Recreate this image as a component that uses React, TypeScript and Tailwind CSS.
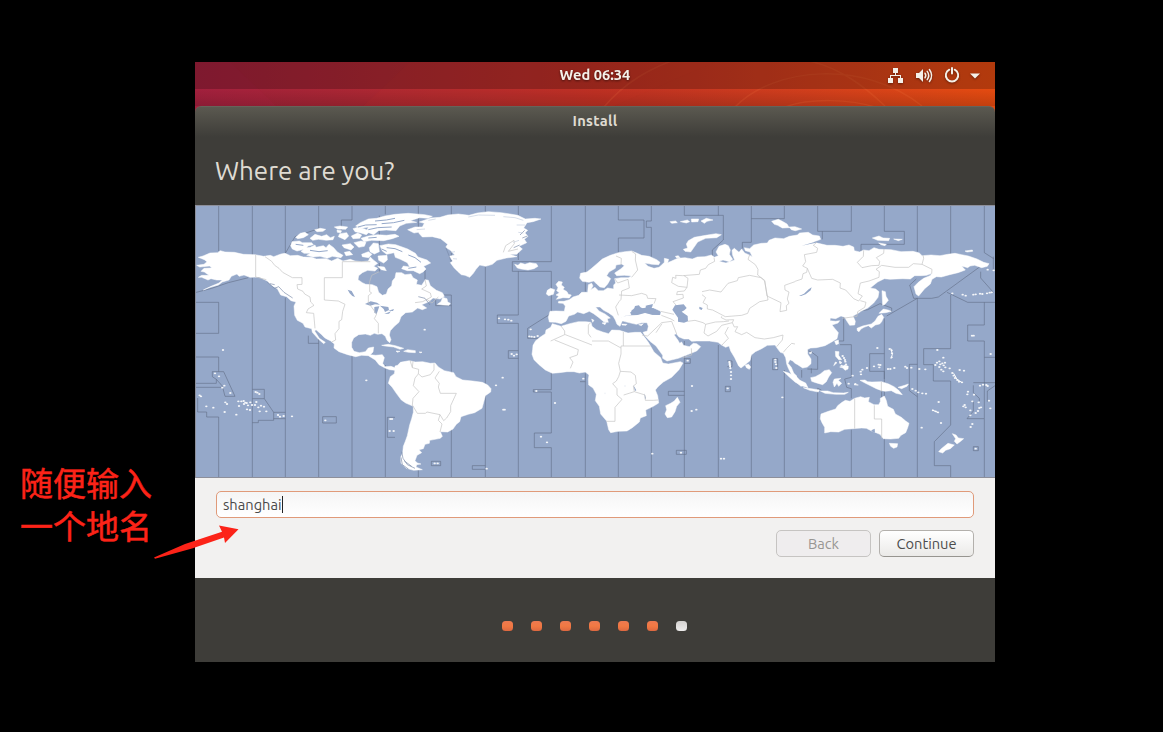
import React from "react";

const LAND: string[] = [
  // North America
  "M10 157L24 153L45 144L68 143L76 137L90 141L118 142L145 148L180 149L206 154L226 151L236 155L258 147L270 145L286 152L308 151L325 156L350 157L364 162L394 161L410 168L428 160L444 168L466 163L480 168L500 170L520 168L526 156L535 165L548 175L536 184L548 190L540 198L518 196L502 203L491 212L489 224L502 233L512 238L532 239L546 245L551 262L562 271L574 267L579 252L590 242L592 228L600 218L603 203L620 203L630 209L648 207L654 218L667 225L664 238L680 241L691 224L700 226L706 242L724 256L742 263L748 274L735 282L714 279L700 291L680 299L695 309L682 314L668 309L652 321L632 323L618 335L612 352L598 364L586 377L583 390L588 404L584 413L576 406L571 394L561 386L548 388L538 385L526 391L511 387L491 389L476 399L470 412L470 427L477 439L493 443L511 440L520 429L536 426L534 441L526 449L542 451L562 449L568 458L563 475L570 485L588 484L604 490L600 496L584 494L570 489L552 479L541 465L520 452L500 451L482 455L458 449L432 440L417 429L418 417L406 407L390 400L380 389L363 374L359 378L373 400L391 412L386 416L370 402L352 382L350 371L330 366L324 355L307 346L299 331L297 303L303 291L288 287L275 275L257 270L247 251L231 242L215 227L192 216L165 217L147 210L132 214L126 207L109 214L102 225L82 231L70 240L46 247L25 255L48 244L72 234L82 225L65 225L48 221L39 225L20 217L10 217L20 211L42 211L28 201L18 199L27 190L50 189L44 183L14 186L5 181L27 178L36 170L28 164Z",
  // Arctic archipelago
  "M287 122L291 110L313 108L322 113L350 113L355 119L339 123L331 132L306 138L292 132Z",
  "M318 139L334 128L346 127L360 120L363 127L385 122L393 128L402 118L416 128L427 141L444 151L438 158L412 154L397 160L375 154L354 156L335 151L346 145L327 145Z",
  "M302 97L316 85L330 82L340 89L325 98L308 101ZM345 100L360 88L380 94L395 89L406 98L418 94L414 104L394 106L370 103L353 106ZM359 74L376 70L392 73L384 79L366 80Z",
  "M418 66L435 63L458 66L452 73L428 72ZM434 86L455 83L461 93L450 104L430 95ZM426 75L440 77L437 83L427 82ZM441 120L466 116L477 126L468 135L447 128ZM469 93L488 84L500 90L494 100L474 101Z",
  "M474 71L488 67L509 72L525 79L514 89L498 84L480 80ZM477 113L498 108L513 112L508 124L491 127ZM482 63L496 53L520 42L545 40L570 33L600 28L640 25L689 29L712 34L699 40L673 38L646 47L665 52L634 55L614 63L603 77L574 75L550 77L536 89L514 80L520 66L501 70Z",
  "M498 100L520 93L548 89L574 91L600 88L612 94L592 101L566 107L530 106L507 110ZM523 128L535 114L550 116L553 140L538 147L525 140ZM448 142L464 139L473 149L453 152ZM500 148L520 140L531 148L521 158L502 155ZM549 153L576 151L577 165L566 174L551 166ZM548 184L568 186L574 197L559 194Z",
  "M555 122L580 117L602 119L613 123L638 132L661 145L669 156L696 165L707 174L686 184L693 192L684 201L674 206L655 197L637 197L620 191L625 183L644 186L637 173L616 163L601 157L597 143L575 148L562 138Z",
  // Greenland
  "M638 74L660 66L682 66L688 55L673 51L707 39L735 37L758 30L790 27L822 31L847 24L880 20L919 23L945 27L968 31L991 42L1020 40L1038 42L1014 50L996 53L986 69L998 76L990 84L999 94L988 103L995 113L972 124L982 132L965 148L944 148L966 155L934 159L906 166L892 178L872 184L854 180L843 193L835 205L824 217L810 211L799 209L789 200L777 188L766 173L773 168L763 154L779 150L766 136L752 127L758 118L737 101L712 95L682 96L669 82L657 84Z",
  "M727 298L738 290L743 277L756 281L758 291L766 295L762 301L744 300Z",
  // Iceland and Britain
  "M959 178L969 181L977 174L990 178L1004 173L1024 176L1029 184L1017 191L999 195L978 192L967 189Z",
  "M1083 238L1091 229L1102 231L1099 240L1108 247L1104 253L1116 260L1120 268L1129 270L1123 279L1104 278L1084 283L1091 274L1083 270L1093 263L1085 257L1089 248ZM1054 267L1057 256L1067 250L1079 254L1075 268L1061 272Z",
  // Eurasia
  "M1200 247L1210 257L1225 257L1238 249L1256 252L1256 240L1262 234L1259 221L1278 218L1300 218L1310 213L1288 211L1265 212L1259 204L1277 192L1288 182L1280 177L1263 180L1261 190L1242 201L1235 212L1247 221L1238 237L1228 248L1215 246L1205 237L1196 228L1182 232L1162 229L1154 219L1157 205L1176 201L1190 190L1205 177L1222 162L1246 151L1270 143L1290 140L1310 138L1325 144L1340 151L1362 154L1385 164L1395 172L1391 179L1371 178L1349 174L1359 184L1377 190L1392 187L1399 181L1408 172L1408 160L1421 163L1418 173L1430 168L1448 160L1470 158L1492 162L1507 156L1530 155L1549 150L1558 157L1570 152L1563 141L1572 124L1590 118L1600 122L1606 135L1603 148L1613 163L1603 170L1584 165L1572 169L1593 174L1619 165L1613 151L1611 136L1618 130L1632 142L1640 132L1649 144L1661 149L1672 155L1665 141L1651 137L1648 128L1664 131L1676 120L1699 115L1717 114L1722 106L1740 99L1766 101L1783 94L1807 90L1814 84L1840 82L1853 90L1873 93L1877 103L1856 111L1870 115L1896 121L1920 121L1944 124L1962 120L1976 126L1978 137L1994 141L2006 135L2022 137L2037 128L2052 133L2088 134L2118 140L2154 139L2173 144L2181 152L2208 150L2235 152L2258 148L2280 145L2300 149L2320 153L2346 162L2366 172L2382 176L2377 184L2360 188L2339 181L2325 183L2318 188L2300 183L2311 195L2289 203L2264 209L2239 216L2224 215L2211 223L2206 237L2189 251L2171 273L2163 267L2157 245L2170 232L2186 220L2205 212L2211 205L2195 211L2179 212L2159 212L2146 222L2123 221L2085 223L2068 221L2048 231L2033 243L2026 249L2042 252L2052 260L2049 277L2036 294L2018 309L1998 319L1989 325L1974 333L1981 349L1979 360L1964 361L1956 349L1949 337L1938 333L1922 341L1906 339L1905 347L1922 349L1934 347L1929 354L1911 360L1920 371L1930 383L1926 401L1910 411L1890 422L1864 428L1847 429L1838 433L1838 447L1848 462L1848 476L1837 486L1823 489L1808 479L1800 475L1793 468L1785 464L1779 475L1789 487L1796 504L1806 514L1800 516L1789 508L1780 490L1775 477L1772 458L1765 445L1756 442L1749 433L1740 420L1717 421L1700 431L1681 440L1669 450L1665 467L1652 478L1638 489L1631 483L1619 458L1607 438L1602 423L1592 427L1581 421L1569 412L1543 408L1505 408L1490 409L1481 402L1467 402L1452 396L1444 386L1437 389L1449 406L1454 415L1460 411L1465 421L1483 425L1495 415L1505 416L1517 425L1505 438L1488 445L1450 460L1416 468L1403 460L1403 451L1383 423L1365 409L1350 393L1344 382L1357 378L1360 364L1356 353L1340 353L1324 358L1298 352L1276 346L1280 335L1299 332L1328 330L1350 324L1373 330L1396 330L1397 319L1376 309L1365 309L1375 302L1359 300L1350 308L1343 310L1330 302L1320 308L1309 316L1308 329L1291 332L1278 337L1282 347L1275 364L1266 358L1261 345L1254 333L1240 323L1226 316L1215 306L1202 306L1212 318L1230 327L1246 339L1237 341L1240 352L1226 350L1212 338L1196 326L1183 319L1166 326L1148 321L1138 328L1121 333L1113 349L1099 356L1081 352L1063 351L1060 337L1065 319L1082 318L1108 319L1111 303L1104 295L1090 294L1091 289L1107 289L1123 284L1134 276L1151 271L1160 262L1178 262L1180 239L1190 235L1194 243L1187 254Z",
  // Africa
  "M1072 356L1098 364L1124 356L1150 350L1172 350L1188 352L1191 364L1204 374L1223 381L1241 386L1250 375L1273 376L1299 384L1320 382L1337 382L1349 397L1360 412L1377 441L1397 458L1403 474L1420 477L1456 470L1464 474L1452 494L1430 517L1405 531L1389 545L1381 555L1388 572L1391 594L1375 604L1352 615L1354 632L1336 639L1333 651L1312 668L1296 678L1269 679L1247 683L1241 674L1235 648L1217 627L1213 604L1201 587L1204 568L1194 549L1181 540L1180 523L1182 510L1171 501L1153 504L1137 500L1116 500L1093 503L1072 505L1051 495L1032 479L1017 464L1011 448L1013 433L1014 421L1022 407L1035 397L1051 386L1053 375L1067 367Z",
  "M1447 577L1455 592L1445 604L1440 620L1430 636L1417 638L1410 627L1415 614L1412 602L1427 595L1438 588Z",
  // South America
  "M600 483L608 481L616 472L632 469L643 467L661 471L683 470L706 475L720 474L730 486L748 497L776 503L783 515L803 525L833 528L862 532L878 540L888 551L887 561L871 572L866 592L861 610L839 623L820 628L798 635L794 650L784 658L774 672L758 681L736 680L742 694L736 700L704 706L703 715L690 718L685 731L672 734L680 743L666 751L660 767L667 774L678 777L665 779L663 786L682 794L656 796L634 790L618 775L617 757L623 744L625 724L631 709L637 692L644 660L650 641L655 622L655 604L632 594L619 585L604 565L591 546L580 535L586 515L598 506L600 494Z",
  // Australia and New Zealand
  "M1878 627L1900 619L1922 612L1928 602L1941 592L1951 586L1965 589L1979 580L1997 575L2009 579L2023 577L2020 590L2037 599L2051 599L2056 590L2056 580L2068 573L2074 587L2078 604L2095 613L2101 627L2119 637L2132 648L2142 655L2138 668L2132 683L2118 691L2111 700L2087 702L2065 701L2055 688L2043 683L2030 678L2014 670L2000 669L1972 671L1949 673L1931 681L1907 680L1889 684L1889 667L1881 653L1876 641ZM2083 715L2108 716L2106 726L2096 730L2087 724Z",
  "M2272 686L2283 690L2290 699L2306 701L2297 709L2286 717L2278 709L2282 701ZM2259 715L2278 720L2266 731L2252 736L2243 744L2231 740L2238 732Z",
  // Southeast Asian islands
  "M1765 499L1781 504L1798 513L1813 525L1832 534L1839 548L1820 542L1800 531L1782 515ZM1800 510L1809 520L1818 530L1826 541L1818 544L1800 529ZM1847 518L1861 515L1876 507L1888 497L1903 494L1910 503L1901 516L1894 530L1883 539L1862 533L1850 529Z",
  "M1825 548L1839 550L1855 552L1873 555L1870 561L1844 556ZM1876 558L1898 558L1915 563L1946 564L1960 562L1949 568L1922 568L1890 565ZM1914 532L1918 522L1938 520L1930 526L1940 535L1931 544L1926 535L1918 546Z",
  "M1995 526L2010 525L2018 530L2031 531L2060 530L2081 537L2097 545L2111 556L2122 569L2103 565L2089 557L2070 559L2060 557L2044 551L2028 543L2010 534ZM2109 547L2129 541L2140 537L2136 544L2120 551Z",
  "M1921 439L1932 440L1931 451L1940 464L1931 464L1922 454ZM1934 486L1942 484L1950 480L1960 484L1959 492L1950 496L1944 489ZM1933 468L1940 472L1936 477ZM1921 471L1926 473L1916 482ZM1842 444L1850 440L1848 447ZM1919 409L1930 405L1931 416L1923 419Z",
  // Japan, Sakhalin, Sri Lanka
  "M1986 370L2003 363L2029 357L2040 348L2049 334L2060 328L2066 337L2060 350L2054 357L2041 360L2029 369L2020 362L2007 367L1998 372L1992 380L1987 377ZM2052 325L2058 319L2065 312L2079 315L2089 319L2072 323ZM2061 257L2071 260L2073 274L2080 286L2070 298L2063 301ZM1651 480L1661 478L1667 486L1663 493L1654 488Z",
  // Northern islands
  "M1465 133L1478 129L1474 117L1480 107L1498 97L1532 91L1563 86L1579 89L1565 98L1532 100L1508 111L1497 127L1487 141L1470 139ZM1425 50L1442 48L1447 53L1430 55ZM1456 50L1477 45L1484 50L1474 54ZM1489 42L1511 42L1509 50L1490 51ZM1518 48L1534 40L1554 45L1536 49L1528 55Z",
  "M1730 49L1750 43L1762 49L1776 57L1783 68L1762 69L1748 61L1738 58ZM1782 66L1800 65L1820 72L1801 77L1789 74ZM2032 99L2052 93L2064 99L2084 100L2081 107L2048 106ZM2096 102L2122 103L2110 107ZM2051 114L2074 118L2070 122L2058 119ZM2310 138L2332 135L2333 139L2316 141ZM1441 154L1450 152L1455 158L1444 158Z",
  // Caribbean
  "M560 421L580 418L601 422L626 430L615 433L596 426L570 423ZM626 439L638 434L661 437L661 443L640 442ZM603 438L615 439L607 442ZM672 441L681 441L678 444Z",
  // Mediterranean islands
  "M1281 357L1296 358L1293 361L1281 360ZM1331 359L1345 356L1339 362ZM1190 342L1197 346L1193 352ZM1221 354L1234 352L1230 359Z",
];

const LAKES: string[] = [
  "M1305 323L1317 313L1320 303L1332 301L1337 310L1353 309L1352 302L1374 297L1370 308L1390 317L1397 322L1394 330L1372 329L1350 323L1326 330L1310 329Z",
  "M1432 314L1440 301L1466 298L1475 309L1468 316L1460 320L1478 333L1479 349L1467 353L1449 350L1449 338L1441 327Z",
  "M458 254L470 258L480 276L472 273L464 265Z",
  "M510 297L527 289L546 293L555 299L540 298L526 302ZM538 306L553 304L545 327L538 323ZM555 302L580 306L582 315L570 321L566 312ZM568 327L588 319L582 326ZM580 317L597 312L594 318Z",
  "M1812 273L1827 266L1841 253L1850 247L1847 256L1832 268L1818 273Z",
  "M1513 305L1523 309L1520 315L1513 312ZM1315 540L1324 556L1320 558ZM1348 565L1353 580L1350 582ZM1877 110L1820 122L1861 110ZM2029 676L2039 671L2040 683L2032 680Z",
  "M360 377L372 388L396 404L405 411L387 400L369 386Z",
];

const BORDERS: string[] = [
  "M182 149V216L214 224M210 155L230 169L239 181L252 190L263 202L292 218H321V238L306 239L308 252L324 259L329 267L345 276L347 291L357 301L339 312L334 323L356 325L360 370",
  "M526 170H442V218H388V285L430 288L450 298L443 319L440 344L432 349V371L420 386L422 405L410 411",
  "M553 200L530 211L524 230V260L530 264L520 272V293L545 327L538 341L550 355V385",
  "M690 224L694 243L680 252L706 264L709 276L683 290L660 293M696 283L711 294L730 276M925 142L932 122L957 106L958 116L940 139L969 132",
  "M654 469L652 488L671 493L670 507L660 519L655 542L672 560L654 580L652 600L667 625L691 625L696 621L735 629L746 647L755 639L767 620L767 602L784 565H736L730 546L733 535L720 519L733 499M671 507L681 516L706 509L717 495V475M735 629L730 646L741 657L735 681M645 466L652 488",
  "M1098 363L1109 378L1109 389L1067 408M1079 405L1150 434L1147 450L1124 458L1134 471L1126 490M1109 389H1111L1191 420",
  "M1188 352L1180 360V386L1188 397M1285 381V423H1366M1285 423H1278V447L1271 475L1276 499L1271 515L1264 528L1253 536L1266 551L1266 570L1281 583L1260 607V649L1234 649M1191 408H1240L1278 429M1276 499L1308 501L1321 511L1324 536L1315 543L1318 560L1350 570L1351 586L1376 586L1389 585M1318 560L1286 570",
  "M1463 458L1490 450L1489 430M1263 153L1279 160L1278 180M1310 139L1322 147L1321 165L1328 195L1310 217M1259 221L1268 234L1299 223L1303 249L1280 258L1278 283L1272 290L1262 306L1270 331M1272 270L1310 272L1340 265L1355 270L1358 280L1383 281L1377 296M1397 319L1437 328",
  "M1557 158L1559 169L1540 179L1532 190L1516 195L1513 208L1463 212L1442 211L1443 220L1433 217L1430 233L1450 244L1476 247L1479 220L1467 212M1476 247L1468 258L1447 260L1445 269L1464 268L1465 279L1434 290L1443 300",
  "M1521 260L1544 255L1578 261L1599 235L1627 227L1630 218L1664 211L1698 218L1709 228L1719 285L1694 290L1664 310L1658 325L1640 331L1591 335L1553 315L1537 312L1537 300L1524 293L1532 278L1521 269",
  "M1664 149L1659 163L1681 179L1689 193L1688 210L1709 226M1709 226L1716 273L1758 293L1755 320L1775 316L1774 302L1782 295L1777 282L1782 261L1770 255L1769 241L1800 230",
  "M1478 349L1500 346L1524 353L1532 358L1527 384L1539 393L1565 379L1580 361L1612 353L1616 344L1593 345L1579 338L1580 334M1532 358L1561 351L1585 350L1602 348M1612 353L1618 366L1628 365L1620 380L1640 389L1655 382L1680 398L1708 402L1735 398L1764 390L1762 405L1745 425M1600 366L1590 385L1600 400L1580 421M1342 391L1358 393L1400 353L1430 349L1445 387M1383 383L1401 356M1399 331L1428 342L1438 348",
  "M1866 111L1855 121L1868 130L1865 142L1828 149L1832 170L1823 183L1837 190L1835 202L1824 206L1821 222L1800 229M1837 190L1850 220L1868 225L1913 223L1936 234L1935 249L1952 255L1976 281L1991 288L2002 273L1989 266L1996 234L2022 228L2052 217L2053 200L2043 193L2060 181M2006 136L2005 154L1987 172L2001 188L2030 182L2052 181L2054 169L2044 158L2066 145L2067 132M2060 181L2100 187L2141 187L2155 176L2181 178L2186 160L2184 150M2181 178L2211 193L2210 206M1996 287L2013 292L2009 307L1988 320L1986 334L1942 340",
  "M1979 580V671M2038 601V642H2060V700M2059 530V560M1765 442L1775 430L1790 415L1800 417",
];

const ZONES: string[] = [
  "M71 0V138M172 0V150M172 218V819M271 0V145L300 95L371 71V0M271 278V819M371 402V819M471 0V45H439V78M471 450V819M571 0V28M571 480V819M553 32V120M553 174V200",
  "M0 263L50 250L100 233L160 218M0 292H71V385H0M0 456H71V500H52V515L64 523L82 543L90 574H120L86 500H71M0 535H64V523M0 547H80M8 579V621H35V636H71V819M172 553H208V581H172M208 581L236 622V646H190V653H172M236 622H271M236 641H271M340 392V415H371M383 635H424V654H383ZM600 637H577V697H600",
  "M670 0V85M670 792V819M690 195V223M769 0V170M747 270H769V819M722 285V302H769M871 0V22M871 184V819M970 0V30M970 132V165M952 170H1069V0M952 170V199H1069V325L998 370V400H1035M970 199V330H907V355H970V819M940 437H970M940 437V460H970",
  "M1069 502V554H1015V561H1069V684H1018V728H1069V819M1171 0V260M1171 505V819M871 782H832V793H871M709 769H737V782H709ZM1155 530H1171",
  "M1270 0V45H1347V99H1270V143M1369 0V48H1354V67H1369V155M1270 680V819M1369 604V819M1468 0V31H1585V105L1552 135V153M1468 408V819M1570 0V31M1570 420V819M1669 0V112H1642V130M1669 41H1768V0M1669 448V819M1768 495V819M1420 559H1468M1420 559V571H1468M1444 736H1474V748H1444ZM1591 544H1606V560H1591ZM1733 461H1748V494H1733ZM1468 461H1486V475H1468M1597 468H1611V485H1597",
  "M1868 0V79H1969V0M1882 79V103M2068 0V79H2128V118H1998V137M2167 0V140M2267 0V148M2368 0V143L2396 161M2395 155V195M2355 185L2230 276L2210 280H2156L2144 240L2164 222M2256 262L2318 292H2400M2357 200V219L2395 262M2167 280V819M2075 333L2167 280M2068 340V819M2267 270V431H2186V479H2215V528H2267V660L2218 710V782H2267V819",
  "M1838 416L1820 432L1848 440L1868 455V493L1837 492M1868 550V819M1946 337V408H1930M1935 419H1969V517L1949 522L1955 547L1969 551V580M1969 674V819M2068 446H2024V499H2068V522M2143 478H2167M2143 478V557L2167 575M2318 408V360H2368V292M2318 408H2368V819M2400 457H2368M2335 541V563L2353 580V588M2335 533H2400M2400 542L2377 558V590M2335 588V618L2316 641H2367M2335 725H2350V737H2335Z",
  "M1868 550L1879 555M1950 324L1986 320L2018 314L2055 296L2090 309V320M1820 495V518M1849 490V505M2060 600V555",
];

const ISLANDS: number[][] = [
  [84, 435], [60, 505], [72, 514], [88, 542], [82, 548], [106, 564], [14, 571], [18, 574], [34, 604], [55, 608], [91, 592], [96, 597], [89, 621], [124, 629],
  [130, 589], [139, 589], [132, 603], [146, 588], [151, 593], [147, 597], [155, 594], [159, 601], [166, 592], [171, 600], [156, 613], [165, 615], [180, 600], [184, 591], [190, 607], [198, 602], [207, 605], [194, 619], [214, 619], [182, 561], [187, 563], [193, 567],
  [249, 630], [255, 635], [266, 633], [291, 634], [391, 646], [514, 526], [586, 642], [591, 642], [584, 678], [596, 678], [689, 374], [912, 340], [930, 343], [940, 344], [949, 347],
  [1007, 373], [1003, 394], [1010, 395], [1018, 396], [1028, 393], [950, 447], [957, 452], [965, 448], [923, 518], [903, 541], [925, 614], [929, 614], [1024, 558], [1080, 594], [1038, 695], [1056, 712], [875, 791], [719, 775], [728, 775],
  [1165, 521], [1230, 565], [1290, 543], [1491, 543], [1490, 618], [1504, 614], [1458, 743], [1372, 746], [1578, 761], [1587, 761], [1478, 467], [1598, 550], [1762, 577],
  [1603, 471], [1604, 477], [1605, 483], [1606, 490], [1608, 501], [1608, 511], [1608, 522], [1741, 464], [1741, 471], [1743, 478], [1744, 489],
  [1943, 453], [1947, 459], [1950, 465], [1951, 470], [1953, 478], [1940, 482], [1936, 473], [1973, 512], [1961, 536], [1981, 537],
  [1997, 500], [2002, 494], [1998, 508], [2016, 489], [2037, 484], [2051, 479], [2056, 480], [2053, 487], [2047, 429], [2084, 432], [2090, 436], [2091, 445], [2090, 457], [2079, 492], [2086, 492], [2098, 489], [2131, 485], [2136, 489], [2149, 488], [2173, 492], [2191, 493],
  [2227, 435], [2245, 458], [2226, 473], [2221, 480], [2233, 469], [2236, 478], [2233, 486], [2242, 475], [2246, 481], [2250, 473], [2251, 487], [2239, 494], [2245, 499], [2264, 490], [2272, 504], [2276, 512], [2280, 519], [2287, 525], [2292, 530], [2301, 532], [2294, 495], [2307, 497],
  [2152, 552], [2162, 557], [2170, 562], [2182, 565], [2193, 566], [2231, 591], [2214, 616], [2222, 619], [2229, 622], [2238, 654], [2180, 668], [2319, 560], [2317, 568], [2337, 569], [2332, 589], [2309, 600], [2305, 604], [2312, 607], [2326, 616], [2326, 631], [2342, 624], [2349, 618], [2353, 609], [2358, 607], [2351, 592], [2382, 587], [2386, 610], [2355, 542], [2364, 539], [2374, 540], [2378, 543], [2387, 447], [2327, 666], [2332, 657], [2342, 731], [2331, 392], [2336, 392], [2272, 265], [2303, 269], [2312, 272], [2335, 269], [2342, 268], [2355, 266], [2362, 267], [2376, 265], [2384, 263], [2390, 262], [2378, 194], [2396, 196],
];

function WorldMap() {
  return (
    <svg viewBox="0 0 2400 819" className="block h-[273px] w-[800px] shrink-0 bg-[#95a8c9]" aria-label="Time zone map">
      <path d={ZONES.join("")} fill="none" stroke="#5f6b84" strokeWidth="2.6" opacity="0.68" />
      <path d={LAND.join("")} fill="#fff" stroke="#fff" strokeWidth="1.5" strokeLinejoin="round" />
      <path d={LAKES.join("")} fill="#95a8c9" />
      <path d={BORDERS.join("")} fill="none" stroke="#c2c2c2" strokeWidth="2" />
      <g stroke="#788aa8" strokeWidth="2" fill="none">
        <path d="M752 127L763 154L768 170M618 757L622 779L640 792M620 740L624 760L637 779L660 790M628 768L650 784M989 76L975 90M997 93L982 99M974 120L956 128M216 230L238 250L251 245L267 262L293 279M225 236L239 239M670 275L690 280L705 300" />
      </g>
      {/* channels between the northern Canadian islands */}
      <path
        d="M489 66L512 60L545 59M540 48L574 45L600 40M520 74L548 68L590 66M560 56L596 53L628 46M302 118L325 121M345 136L372 140L398 137M520 99L545 97M575 128L600 131L622 140M640 150L660 158L678 172M560 132L575 139M640 190L664 186"
        fill="none"
        stroke="#95a8c9"
        strokeWidth="3"
      />
      <path
        d="M690 72L665 74M700 46L722 42M820 36L850 30L900 31M925 35L960 38L985 46M965 60L990 60M972 106L955 112M985 84L970 82M780 140L768 142M786 162L774 161"
        fill="none"
        stroke="#c3cddf"
        strokeWidth="2"
      />
      <g fill="#f4f6f9">
        {ISLANDS.map(([x, y], i) => (
          <ellipse key={i} cx={x} cy={y} rx="3.6" ry="2.8" />
        ))}
      </g>
      <path d="M2212 615L2230 623M2276 505L2286 523L2300 532M1990 540L1977 539M2088 431L2092 448L2088 461M1604 469L1606 490" fill="none" stroke="#fff" strokeWidth="3" />
      <path d="M0 1.5H2400M1.5 0V819M0 817.5H2400" fill="none" stroke="#8d8f9a" strokeWidth="3" />
    </svg>
  );
}

function Wallpaper() {
  return (
    <svg className="absolute inset-0 h-[52px] w-[800px]" viewBox="0 0 800 52" aria-hidden="true">
      <path d="M0 0H35L90 52H0Z" fill="#c42a62" opacity="0.06" />
      <path d="M160 52L215 0H520L400 52Z" fill="#d43b26" opacity="0.07" />
      <g fill="none" stroke="#ff8a50" strokeWidth="1.5" opacity="0.13">
        <path d="M408 46C430 20 455 6 485 -4M540 45C580 4 670 -2 727 44M590 45C615 36 655 37 680 45M610 -2C645 5 670 25 690 44" />
      </g>
    </svg>
  );
}

function StatusIcons() {
  return (
    <svg width="98" height="20" viewBox="0 0 98 20" className="block drop-shadow-[0_1px_1px_rgba(0,0,0,0.4)]" aria-hidden="true">
      <g fill="#f4f0e9">
        <path d="M6 2H11V7H6ZM1 12H6V17H1ZM11 12H16V17H11Z" />
        <path d="M8 7H9V9H14V12H13V10H4V12H3V9H8Z" />
        <path d="M29 7H32L36 3V16L32 12H29Z" />
        <path d="M83 7.5H93L88 12.5Z" />
      </g>
      <g fill="none" stroke="#f4f0e9" strokeWidth="1.5" strokeLinecap="round">
        <path d="M38 7.2Q39.6 9.5 38 11.8M40.2 5.4Q43.2 9.5 40.2 13.6M42.4 3.5Q46.8 9.5 42.4 15.5" />
        <path d="M62.3 3.7A6.2 6.2 0 1 0 67.7 3.7" strokeWidth="1.9" />
        <path d="M65 2V7.5" strokeWidth="2" />
      </g>
    </svg>
  );
}

function StepDots() {
  return (
    <div className="flex h-[84px] items-start gap-[18px] bg-[#3e3d39] pt-[43px] pl-[307px]">
      {[0, 1, 2, 3, 4, 5, 6].map((n) => (
        <span
          key={n}
          className={
            n < 6
              ? "h-2.5 w-[11px] rounded-[3.5px] bg-linear-to-b from-[#ed7950] via-[#f17943] to-[#dd6840]"
              : "h-2.5 w-[11px] rounded-[3.5px] bg-linear-to-b from-[#d3d1cf] to-[#eeedec]"
          }
        />
      ))}
    </div>
  );
}

export default function App() {
  return (
    <div className="relative flex h-[732px] w-[1163px] overflow-hidden bg-black font-['Ubuntu','Noto_Sans',sans-serif]">
      <aside className="w-[195px] shrink-0 pt-[463px] pl-5 font-['Liberation_Sans','Noto_Sans_CJK_SC',sans-serif] text-[33px] leading-[43px] whitespace-nowrap text-[#fc2318] [-webkit-text-stroke:0.5px_#fc2318]">
        <div>随便输入</div>
        <div>一个地名</div>
      </aside>

      <main className="mt-[62px] flex h-[600px] w-[800px] flex-col overflow-hidden">
        <div className="relative h-[52px] shrink-0 bg-linear-to-r from-[#a0203b] via-[#bd3023] to-[#e54b10]">
          <Wallpaper />
          <div className="relative grid h-[27px] grid-cols-[1fr_auto_1fr] items-center bg-black/22 text-[14.67px] font-bold text-[#f5f1ea]">
            <span />
            <span className="leading-[25px] -translate-y-px drop-shadow-[0_1px_1px_rgba(0,0,0,0.5)]">Wed 06:34</span>
            <span className="flex justify-end pr-[10px]">
              <StatusIcons />
            </span>
          </div>
          <div className="h-[17px] bg-linear-to-b from-transparent to-black/15" />
        </div>

        <section className="relative -mt-2 flex flex-1 flex-col">
          <header className="h-[31px] shrink-0 rounded-t-[6px] border-t border-[#66635a] bg-linear-to-b from-[#5b5950] to-[#3e3d39] text-center text-[14.67px] leading-[27px] font-bold tracking-[0.3px] text-[#dfdbd2]">
            Install
          </header>
          <h1 className="h-[68px] shrink-0 bg-[#3e3d39] pl-5 text-[26px] leading-[67px] font-normal text-[#dfdbd2]">
            Where are you?
          </h1>
          <WorldMap />
          <div className="flex h-[100px] shrink-0 flex-col bg-[#f2f1f0] px-[21px] pt-[13px]">
            <div className="flex h-[27px] items-center rounded-[5px] border border-[#e09a79] bg-linear-to-b from-[#f5f5f5] to-white pl-1.5 text-[14.67px] text-[#4a4a4a]">
              <span className="pt-px">shanghai</span>
              <span className="h-[17px] w-px bg-[#222]" />
            </div>
            <div className="mt-3 flex justify-end gap-2 text-[14.67px]">
              <button className="h-[27px] w-[95px] rounded-[5px] border border-[#c6c4c2] bg-[#efedee] pt-px text-[#989693]">Back</button>
              <button className="h-[27px] w-[95px] rounded-[5px] border border-[#b3b0ac] border-b-[#979590] bg-linear-to-b from-white to-[#ebeae8] pt-px text-[#4c4c4c]">
                Continue
              </button>
            </div>
          </div>
          <StepDots />
        </section>
      </main>

      <svg className="absolute top-[520px] left-[150px] h-[45px] w-[95px]" viewBox="150 520 95 45" aria-hidden="true">
        <path d="M154 557.5L185 544L222 531.8L219 525.5L238.5 529.3L225 543L224 537.5L192 548.5L155 558.8Z" fill="#fc2318" />
      </svg>
    </div>
  );
}
